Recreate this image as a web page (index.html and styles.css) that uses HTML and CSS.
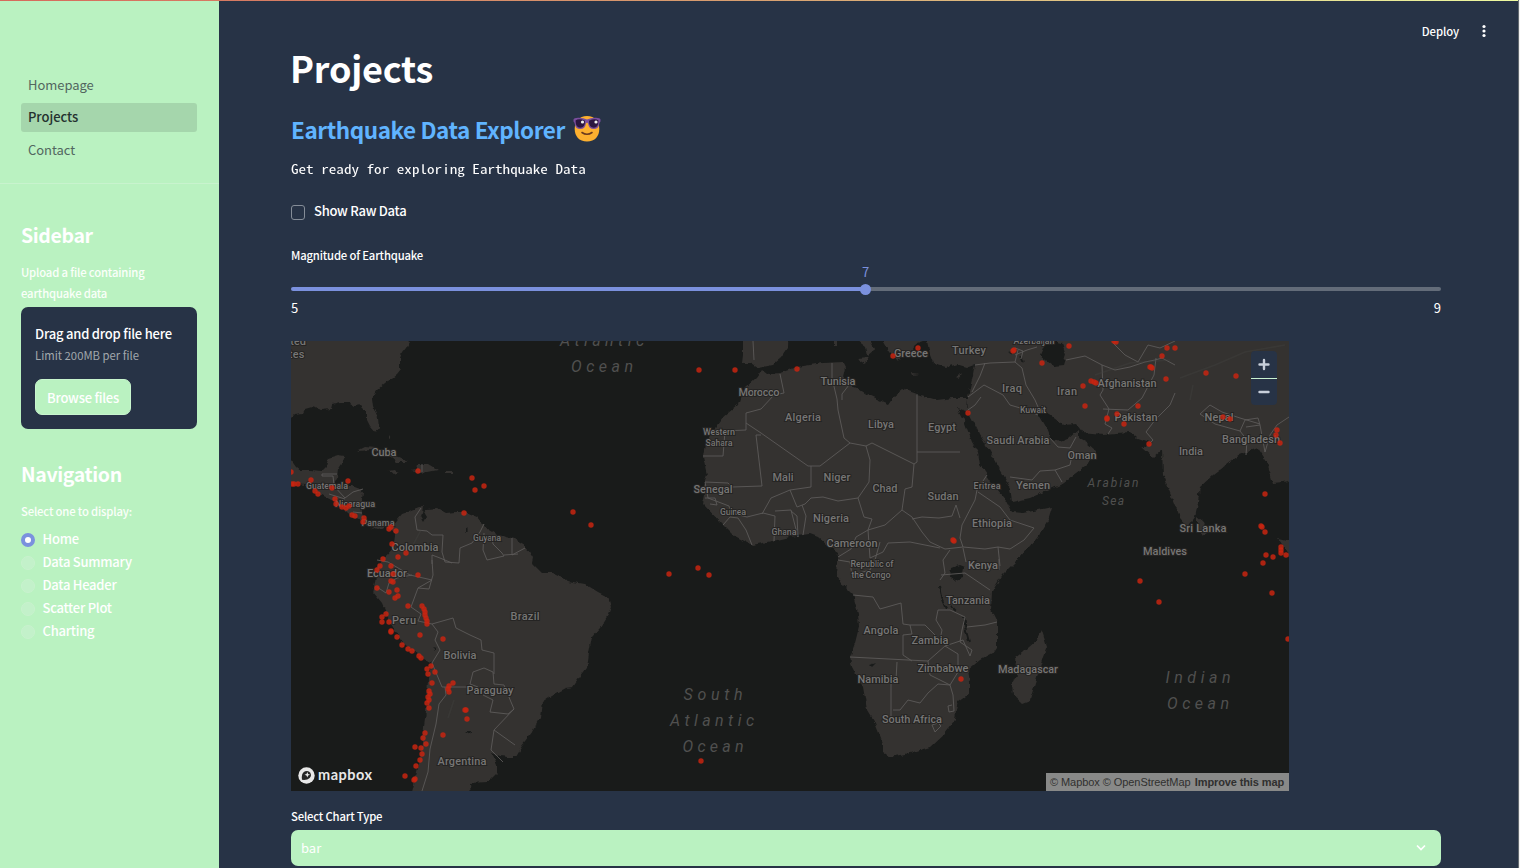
FILE: index.html
```html
<!DOCTYPE html>
<html lang="en">
<head>
<meta charset="utf-8">
<title>Projects</title>
<link rel="stylesheet" href="styles.css">
</head>
<body>
<div class="app">
  <div class="decoration"></div>
  <aside class="sidebar">
    <nav class="pages">
      <a class="page">Homepage</a>
      <a class="page active">Projects</a>
      <a class="page">Contact</a>
    </nav>
    <section class="side-body">
      <h2 class="side-title">Sidebar</h2>
      <div class="side-label upload-label">Upload a file containing<br>earthquake data</div>
      <div class="dropzone">
        <div class="drop-title">Drag and drop file here</div>
        <div class="drop-limit">Limit 200MB per file</div>
        <button class="browse">Browse files</button>
      </div>
      <h2 class="side-title nav-title">Navigation</h2>
      <div class="side-label">Select one to display:</div>
      <div class="radios">
        <label class="radio"><i class="ring on"></i><span>Home</span></label>
        <label class="radio"><i class="ring"></i><span>Data Summary</span></label>
        <label class="radio"><i class="ring"></i><span>Data Header</span></label>
        <label class="radio"><i class="ring"></i><span>Scatter Plot</span></label>
        <label class="radio"><i class="ring"></i><span>Charting</span></label>
      </div>
    </section>
  </aside>
  <main class="main">
    <header class="toolbar"><span>Deploy</span>
      <svg class="kebab" width="6" height="14" viewBox="0 0 6 14"><g fill="#fff"><circle cx="3" cy="2.5" r="1.6"/><circle cx="3" cy="7" r="1.6"/><circle cx="3" cy="11.5" r="1.6"/></g></svg>
    </header>
    <h1 class="title">Projects</h1>
    <h2 class="subtitle"><span class="sub-text">Earthquake Data Explorer</span>
      <svg class="emoji" width="28" height="28" viewBox="0 0 28 28"><path d="M14 1C6 1 1.700 7 1.700 14S6 26.500 14 26.500 26.300 21 26.300 14 22 1 14 1z" fill="#fdb02f"/><path d="M.5 4.500Q1 3 5 2.800q5-.2 9 1.700 4-1.900 9-1.700 4 .2 4.500 1.700v2q-1 .5-1.400 3-.8 4.500-5.300 4.500-5 0-5.700-5.500L14 7.500l-1.100 1Q12.200 14 7.200 14 2.700 14 1.900 9.500 1.500 7 .5 6.500z" fill="#7a4e9e"/><path d="M2.500 5.500Q6 3 12 5.800q.2 7-4.800 7Q2.700 12.800 2.500 5.500zM25.500 5.500Q22 3 16 5.800q-.2 7 4.800 7 4.500 0 4.700-7.300z" fill="#2b1640"/><circle cx="9.500" cy="7" r="1.600" fill="#eee"/><circle cx="23" cy="7" r="1.600" fill="#eee"/><path d="M9 17.500q5 3.500 10 0" fill="none" stroke="#6b3a1e" stroke-width="1.600" stroke-linecap="round"/></svg>
    </h2>
    <div class="mono"><span>Get ready for exploring Earthquake Data</span></div>
    <label class="check"><i class="box"></i><span>Show Raw Data</span></label>
    <div class="field-label slider-label">Magnitude of Earthquake</div>
    <div class="slider">
      <div class="track"><div class="thumb"><span class="value">7</span></div></div>
      <div class="ticks"><span>5</span><span>9</span></div>
    </div>
    <div class="map">
      <svg class="map-svg" viewBox="291 341 998 450" width="998" height="450">
        <defs><filter id="rough" filterUnits="userSpaceOnUse" x="281" y="331" width="1018" height="470" color-interpolation-filters="sRGB"><feTurbulence type="fractalNoise" baseFrequency=".16" numOctaves="2" seed="4"/><feDisplacementMap in="SourceGraphic" scale="5" xChannelSelector="R" yChannelSelector="G"/></filter></defs>
        <g class="land" filter="url(#rough)">
          <path d="M410 325L410 341 406 348 402 353 400 358 400 370 396 375 385 383 376 391 372 398 373 406 378 418 379 428 376 433 370 426 366 418 366 410 361 405 355 406 350 403 340 403 332 405 331 409 322 410 312 407 305 409 303 413 295 414 291 418 280 425V325z"/>
          <path d="M280 450L291 460 296 467 300 470 310 470 322 471 326 467 328 458 338 455 345 456 342 464 338 470 337 478 333 485 340 486 352 486 360 489 363 493 361 505 362 512 364 520 369 526 378 525 388 521 394 524 397 520 402 514 411 511 419 508 423 505 422 515 427 509 437 508 446 513 456 512 465 512 477 517 485 527 498 535 515 539 525 545 533 558 532 563 542 573 552 573 568 581 585 584 598 592 608 597 611 607 608 615 600 628 592 637 589 653 587 668 580 677 573 687 565 688 552 695 542 702 540 718 532 732 522 745 515 757 508 757 500 756 492 753 497 764 497 773 488 782 470 783 471 800 410 800 415 780 420 760 424 727 427 703 428 677 432 663 418 655 402 642 390 623 382 603 373 592 375 583 377 568 385 557 393 548 395 535 392 530 385 527 377 529 365 525 362 522 355 518 342 507 335 502 322 495 305 485 291 483 280 480z"/>
          <path d="M357 451L365 447 375 448 395 456 408 462 397 462 391 457 372 450zM410 471L416 470 417 464 428 464 438 470 428 472 420 473zM388 471l6-1 5 2-5 2zM446 471h6v2h-6zM389 435l2 3h-2z"/>
          <path d="M762 370L767 374 780 373 797 367 823 363 842 362 845 368 843 377 848 385 857 388 868 395 888 404 893 397 903 389 917 394 937 400 953 398 968 398 967 412 957 408 965 423 972 442 978 452 980 465 987 475 997 490 1007 502 1012 512 1023 513 1052 507 1048 520 1037 538 1020 557 1002 575 992 592 991 610 997 622 997 647 993 653 980 660 968 670 970 682 970 693 958 702 956 710 955 720 945 733 930 747 910 753 890 757 883 752 883 743 875 723 867 710 863 687 852 667 850 657 855 643 859 627 858 613 853 595 845 587 836 573 838 552 827 545 818 537 810 534 790 537 773 541 752 545 733 535 723 525 703 504 705 495 702 488 707 475 703 457 705 445 717 425 723 417 738 405 740 398 745 388 757 377z"/>
          <path d="M927 325L927 341 930 355 933 363 947 367 957 364 967 367 975 364 973 375 968 397 968 411 977 428 980 435 992 455 1003 475 1010 488 1012 502 1030 498 1060 485 1080 470 1095 458 1095 450 1087 443 1078 438 1078 430 1070 437 1060 441 1050 438 1045 425 1038 413 1040 407 1050 415 1063 425 1077 424 1083 432 1103 434 1130 432 1137 438 1152 443 1142 448 1153 458 1162 450 1163 475 1172 498 1180 518 1188 527 1195 517 1198 502 1200 487 1213 475 1230 462 1240 455 1258 448 1267 462 1273 483 1283 482 1300 478V325z"/>
          <path d="M743 325V341L743 355 742 363 750 363 758 368 773 365 782 357 788 348 789 325zM858 325V341L866 347 868 356 875 350 870 341V325zM856 358L868 357 865 364zM882 325L883 341 890 353 898 362 903 353 913 350 917 343 923 341V325zM911 373l9 1-8 1zM955 377l7-3-4 5zM834 325h3v22h-3z"/>
          <path d="M1197 517L1203 522 1207 532 1202 535 1197 528zM1278 538L1300 543V572zM1042 631L1047 647 1043 657 1037 677 1030 700 1022 703 1013 695 1012 683 1017 675 1015 658 1028 648 1037 640z"/>
        </g>
        <g class="water" filter="url(#rough)"><path d="M1040 355L1045 343 1053 341 1062 343 1066 355 1063 365 1053 366zM420 515l4-3 3 5-3 5zM951 568l8-3 5 2-2 11-8 3-4-3zM870 665l6-2-4 4zM432 647l4 1v3zM465 731h6l-1 3zM466 527l3 2-3 3zM1019 355l4 3 2 4-4-2zM1008 352l4-1 2 4z"/><path class="lake" d="M939 586l2 11 5 12M964 617l2 14 3 11M951 606l5 5"/></g>
        <g class="borders">
          <path d="M334 485L333 476H322V474H337M333 485L345 498 353 492 363 489M329 494L345 499M353 512L362 513M422 464V472"/>
          <path d="M421 508L415 517 417 530 427 531 432 535 443 535 442 552 445 562 459 563 460 548 472 543 480 532 484 524M484 533L483 550 487 560 504 556 502 553 493 544 492 537M512 538V555L525 548M504 555L518 554M432 564V555L440 558 452 563M432 560L433 575 429 589 418 588 432 580 410 575 388 562 377 560M377 587L386 593 389 583 397 578 412 575M418 588L411 607 421 614 418 621 432 624 453 618 456 628 470 635 481 640 482 650 494 653 494 674M432 624L438 632 435 640 440 650 432 663 442 687 470 687M478 687L470 684 473 672 484 668 493 672 494 684 504 685 511 702 514 709 508 714 490 712 493 700 483 695M514 709L494 730 491 750 503 762M494 730L515 745M445 687L446 695 439 704 436 724 430 749 428 772 422 791"/>
          <path d="M780 374L784 393 774 395 761 409 746 413V430L725 431 723 456 703 456M746 423L761 433 808 466 820 466 850 443 844 438 838 410 837 399 832 378 832 363M849 385L842 394V400M761 435L756 435 762 486 732 487 728 483 705 482 708 498 729 506 731 513 745 514M762 514L771 498 790 490 811 487 811 466M790 490L797 507 805 504 811 498 823 497 838 501 858 498 869 482 870 460 866 446 850 443M866 446L872 443 914 464 917 462V394M917 452L960 452M914 464L912 487 905 489 902 510 912 517 922 532 930 542 945 549 963 547 960 538 962 525 975 500 977 490 987 475M912 519L922 517 939 518 952 516 956 505 960 518M902 510L885 525 868 530 872 519 864 517 858 498M868 530L856 537 851 549 838 557M963 547L985 549 998 547 1010 549 1024 540 1034 528 1010 520 1000 507 978 492M998 547L1000 566M705 498H715L717 505 710 504M723 525L730 517 738 518 746 530 752 545M735 514L747 517 763 513 775 516 774 541M775 511L791 510 798 537M791 511L797 516 798 537M803 535L806 516 802 505M868 530L870 558 883 552 888 543 910 542 940 548M838 560L850 562 852 575 870 570 875 560 880 542M853 595L873 597 880 609 901 603 903 624 910 625 912 634 903 635V655L912 661M910 625L925 625 940 640 942 630 936 620 938 610 950 610 965 617 962 630 960 642 972 650 970 656 963 640 945 646 928 661 908 660 850 657M967 627L985 625 997 622M945 646L958 654 958 672 950 685 930 675 928 661M897 662L896 680 891 684V717M893 710L900 710 908 700 920 703 928 693 938 684 950 685 953 695 954 711 949 712 948 706 952 705M932 725l6-2 3 3-6 6zM941 575L965 573 990 590M940 580L945 573 943 560 950 550M963 548L966 562"/>
          <path d="M975 365L990 363 1015 362 1018 350M1015 362L1022 368 1026 385 1035 400 1038 407M981 397L975 405 968 410M968 397L984 385 1003 395 1010 405 1027 410 1038 415M1050 438L1058 447 1070 448 1076 437M1073 450L1070 465 1055 470 1040 471 1032 480 1010 477M1055 470L1062 482M985 363L980 376 972 392M1066 360L1085 356 1102 365 1103 390 1100 395 1109 409 1105 424 1112 428 1108 434M1103 409L1128 410 1142 398 1154 375 1156 358M1102 365L1115 370 1130 367 1145 362 1155 360 1162 358 1175 365M1175 393L1170 405 1155 420 1146 432 1153 440 1150 443M1113 343L1125 355 1138 362 1148 345 1160 348 1175 341M1200 414L1210 405 1222 412 1240 418 1260 424M1200 414L1215 424 1240 431 1245 420 1258 418 1260 425 1246 427M1240 431L1247 440 1246 455M1260 425L1265 452M1265 452L1270 435 1277 425 1289 417M753 341L754 360M999 559L999 570M1015 355l12-5 10-3M1015 348l8 3-2 8"/>
        </g>
        <g class="mountains"><path d="M1095 375L1130 363 1170 360M1180 378L1215 365 1245 352 1285 345M1190 400l3-15M421 530l-8 15M454 700l-6 18"/></g>
        <g id="labels" class="labels"></g>
        <g id="quakes" class="quakes"></g>
      </svg>
      <div class="zoom-control">
        <svg width="26" height="54" viewBox="0 0 26 54"><g stroke="#c8cfda" stroke-width="2.400" stroke-linecap="round"><path d="M8.500 13.500h9M13 9v9M8.500 41h9"/></g><path d="M0 27.500h26" stroke="#c9f2d0"/></svg>
      </div>
      <div class="mapbox-logo">
        <svg width="17" height="17" viewBox="0 0 17 17"><circle cx="8.500" cy="8.500" r="8.200" fill="#e8e8e8"/><path d="M4 12.800Q3 6 7 4.300q3.500-1.300 5.300 1.500 1.600 3-.6 5.300Q9 13.500 4 12.800z" fill="#252525"/><path d="M9.300 5l.8 2 2 .8-2 .8-.8 2-.8-2-2-.8 2-.8z" fill="#e8e8e8"/></svg>
        <span>mapbox</span>
      </div>
      <div class="attribution"><span>© Mapbox</span> <span>© OpenStreetMap</span> <b>Improve this map</b></div>
    </div>
    <div class="field-label select-label">Select Chart Type</div>
    <div class="select"><span>bar</span><svg width="10" height="8" viewBox="0 0 10 8"><path d="M1 1.500L5 5.500l4-4" fill="none" stroke="#fff" stroke-width="1.700"/></svg></div>
  </main>
  <div class="edge"></div>
</div>
<script src="map.js"></script>
</body>
</html>
```
FILE: styles.css
```css
* { box-sizing: border-box; }
body { margin: 0; background: #273346; color: #fff; font-family: "Noto Sans CJK SC", "Open Sans", sans-serif; font-size: 13px; }
h1, h2 { margin: 0; }
.app { position: relative; display: flex; width: 1520px; height: 868px; overflow: hidden; }
.decoration { position: absolute; z-index: 2; top: 0; left: 0; width: 1518px; height: 1px; background: linear-gradient(90deg, #d66a5c, #d8a070 50%, #eefaa0); }
.sidebar { flex: none; width: 219px; background: #baf2c1; }
.pages { display: flex; flex-direction: column; gap: 4px; height: 184px; padding: 71px 22px 0 21px; border-bottom: 1px solid #c8f3ce; }
.page { display: block; height: 29px; padding-left: 7px; border-radius: 3px; line-height: 28px; color: #52665f; letter-spacing: -.05px; }
.page.active { margin-top: -1px; background: #a5d6ac; color: #24312f; font-weight: 500; }
.side-body { padding: 36px 22px 0 21px; }
.side-title { height: 30px; line-height: 29px; font-size: 19.5px; font-weight: 700; letter-spacing: -.37px; }
.side-label { font-size: 11.3px; line-height: 21px; font-weight: 500; color: #fafffa; letter-spacing: -.17px; }
.upload-label { margin: 12px 0 3px; white-space: nowrap; }
.dropzone { height: 122px; padding: 16px 14px 0; border-radius: 7px; background: #273346; font-weight: 500; letter-spacing: -.2px; white-space: nowrap; }
.drop-title { line-height: 21px; }
.drop-limit { line-height: 22px; font-size: 11.3px; letter-spacing: 0; color: #a2a8ac; font-weight: 400; }
.browse { display: block; width: 96px; height: 36px; margin-top: 13px; padding: 0; border: 1px solid #c8f5ce; border-radius: 7px; background: #baf2c1; color: #fff; font: inherit; letter-spacing: -.25px; line-height: 31px; }
.nav-title { margin: 30px 0 12px; }
.radios { display: flex; flex-direction: column; margin-top: 6px; }
.radio { display: flex; align-items: center; gap: 7.5px; height: 23px; font-weight: 500; line-height: 21px; letter-spacing: -.25px; }
.radio span { height: 23px; }
.ring { width: 14px; height: 14px; border: 1px solid #c9f2ce; border-radius: 50%; background: #c3f1ca; }
.ring.on { border: 4px solid #7b91de; background: #fff; }
.main { width: 1299px; padding: 0 77px 0 72px; }
.toolbar { display: flex; align-items: center; justify-content: flex-end; gap: 22px; height: 46px; margin-right: -46px; padding-top: 15px; font-size: 11.3px; font-weight: 500; line-height: 30px; letter-spacing: -.1px; }
.title { height: 53px; margin-left: -1px; font-size: 36px; line-height: 43px; font-weight: 700; letter-spacing: -.2px; }
.subtitle { display: flex; align-items: center; gap: 8px; height: 60px; font-size: 22.5px; line-height: 60px; font-weight: 600; letter-spacing: -.42px; color: #60b4ff; }
.mono { height: 20px; font-family: "Noto Sans Mono CJK SC", "Source Code Pro", "DejaVu Sans Mono", monospace; font-size: 12.6px; line-height: 20px; }
.mono span { display: inline-block; transform: scaleX(1.2); transform-origin: 0 50%; }
.check { display: flex; align-items: center; gap: 9px; height: 24px; margin-top: 21px; font-weight: 500; letter-spacing: -.27px; }
.check span { line-height: 20px; height: 22px; }
.box { width: 14px; height: 15px; border: 1px solid #858d98; border-radius: 3px; }
.field-label { font-size: 11.3px; line-height: 20px; font-weight: 500; letter-spacing: -.18px; }
.slider-label { margin-top: 21px; }
.slider { height: 76px; padding-top: 22px; }
.track { position: relative; height: 4px; border-radius: 2px; background: linear-gradient(90deg, #7b91de 50%, #636c79 50%); }
.thumb { position: absolute; left: 569px; top: -3px; width: 11px; height: 11px; border-radius: 50%; background: #7b91de; }
.value { position: absolute; top: -22px; left: 0; width: 11px; text-align: center; line-height: 20px; color: #7b91de; }
.ticks { display: flex; justify-content: space-between; margin-top: 7px; line-height: 20px; }
.map { position: relative; width: 998px; height: 450px; overflow: hidden; background: #191b1a; }
.map-svg { display: block; }
.land { fill: #343230; }
.water { fill: #191b1a; }
.lake { fill: none; stroke: #191b1a; stroke-width: 2; }
.borders { fill: none; stroke: #5c5a59; stroke-width: .9; stroke-linejoin: round; }
.mountains { fill: none; stroke: #454443; stroke-width: 1.5; opacity: .35; }
.labels { font-family: Roboto, sans-serif; font-weight: 500; fill: #777675; stroke: #252423; stroke-width: 2px; paint-order: stroke; text-anchor: middle; }
.labels .ocean { font-weight: 400; font-style: italic; fill: #50504f; stroke: none; }
.quakes { fill: #c82510; fill-opacity: .85; }
.zoom-control { position: absolute; top: 10px; right: 12px; width: 26px; height: 54px; border-radius: 4px; background: #273346; }
.mapbox-logo { position: absolute; left: 7px; bottom: 7px; display: flex; align-items: center; gap: 3px; height: 18px; color: #e8e8e8; font: 700 14.5px/15px Lato, sans-serif; letter-spacing: .5px; }
.mapbox-logo span { height: 17px; }
.attribution { position: absolute; right: 0; bottom: 0; width: 243px; height: 18px; padding: 0 5px 0 4px; background: #888988; color: #30302f; font: 11px/18px "Liberation Sans", sans-serif; letter-spacing: -.07px; white-space: nowrap; display: flex; gap: 3px; }
.attribution b { margin-left: auto; letter-spacing: -.12px; }
.select-label { margin: 15px 0 4px; }
.select { display: flex; align-items: center; justify-content: space-between; height: 36px; padding: 0 15px 0 10px; border-radius: 7px; background: #baf2c1; line-height: 34px; }
.edge { width: 2px; border-left: 1px solid #646b70; background: #f1f1f1; }
```
FILE: map.js
```js
const NS = "http://www.w3.org/2000/svg";

// text, centre x, middle y, width, font size
const countries = [
  ["United", 290, 341, 32, 11], ["States", 288, 354, 33, 11], ["Cuba", 384, 452, 25, 11], ["Guatemala", 327, 486, 42, 9], ["Nicaragua", 355, 504, 40, 9],
  ["Panama", 378, 523, 33, 9], ["Colombia", 415, 547, 47, 11], ["Guyana", 487, 538, 28, 9], ["Ecuador", 387, 573, 40, 11],
  ["Peru", 404, 620, 24, 11], ["Brazil", 525, 616, 29, 11], ["Bolivia", 460, 655, 33, 11], ["Paraguay", 490, 690, 47, 11], ["Argentina", 462, 761, 49, 11],
  ["Morocco", 759, 392, 41, 11], ["Tunisia", 838, 381, 35, 11], ["Algeria", 803, 417, 36, 11], ["Libya", 881, 424, 26, 11], ["Egypt", 942, 427, 28, 11],
  ["Western", 719, 432, 32, 9], ["Sahara", 719, 443, 27, 9], ["Senegal", 713, 489, 39, 11], ["Mali", 783, 477, 21, 11], ["Niger", 837, 477, 27, 11],
  ["Chad", 885, 488, 25, 11], ["Sudan", 943, 496, 31, 11], ["Guinea", 733, 512, 26, 9], ["Ghana", 784, 532, 25, 9], ["Nigeria", 831, 518, 36, 11],
  ["Cameroon", 852, 543, 51, 11], ["Republic of", 872, 564, 43, 9], ["the Congo", 871, 575, 39, 9], ["Eritrea", 987, 486, 27, 9], ["Ethiopia", 992, 523, 40, 11],
  ["Kenya", 983, 565, 30, 11], ["Tanzania", 968, 600, 44, 11], ["Angola", 881, 630, 35, 11], ["Zambia", 930, 640, 37, 11], ["Zimbabwe", 943, 668, 51, 11],
  ["Namibia", 878, 679, 41, 11], ["South Africa", 912, 719, 60, 11], ["Madagascar", 1028, 669, 60, 11], ["Greece", 911, 353, 34, 11], ["Turkey", 969, 350, 34, 11],
  ["Azerbaijan", 1034, 341, 41, 9], ["Iraq", 1012, 388, 20, 11], ["Iran", 1067, 391, 20, 11], ["Kuwait", 1033, 410, 26, 9], ["Saudi Arabia", 1018, 440, 63, 11],
  ["Oman", 1082, 455, 29, 11], ["Yemen", 1033, 485, 34, 11], ["Afghanistan", 1127, 383, 59, 11], ["Pakistan", 1136, 417, 43, 11], ["India", 1191, 451, 24, 11],
  ["Nepal", 1219, 417, 29, 11], ["Bangladesh", 1251, 439, 58, 11], ["Sri Lanka", 1203, 528, 47, 11], ["Maldives", 1165, 551, 44, 11]
];
const seas = [
  ["Atlantic", 602, 340, 84, 16], ["Ocean", 602, 366, 62, 16], ["South", 713, 694, 59, 16], ["Atlantic", 712, 720, 84, 16], ["Ocean", 713, 746, 61, 16],
  ["Indian", 1198, 677, 65, 16], ["Ocean", 1198, 703, 62, 16], ["Arabian", 1113, 483, 51, 12], ["Sea", 1113, 501, 22, 12]
];
const labels = document.getElementById("labels");
function addLabel(item, cls) {
  const [text, x, y, width, size] = item;
  const el = document.createElementNS(NS, "text");
  el.setAttribute("x", x);
  el.setAttribute("y", y + size * 0.36);
  el.setAttribute("font-size", size);
  el.setAttribute("textLength", width);
  if (cls) el.setAttribute("class", cls);
  el.textContent = text;
  labels.appendChild(el);
}
seas.forEach(s => addLabel(s, "ocean"));
countries.forEach(c => addLabel(c));

// earthquake epicentres as x, y pairs
const points = [
  291,472,292,484,294,484,298,484,311,480,348,481,315,491,318,494,332,488,335,499,336,504,342,507,346,508,349,506,352,515,355,516,364,518,363,522,
  389,529,391,527,396,531,392,544,406,553,398,557,391,566,383,559,380,566,377,570,418,471,472,478,484,486,475,490,464,513,573,512,591,525,
  669,574,698,568,709,575,699,370,735,370,797,369,893,356,918,348,968,413,953,540,954,541,1140,581,1159,602,701,761,961,679,
  393,574,418,575,391,581,393,582,377,588,389,592,397,590,398,596,395,598,408,606,386,614,382,617,382,622,389,622,391,631,391,632,397,637,402,645,408,649,412,651,419,656,421,658,
  422,606,424,609,425,612,425,615,426,618,427,621,427,624,420,635,443,639,431,666,427,669,435,672,428,674,432,683,429,691,430,694,428,697,429,700,427,703,429,708,
  453,683,449,686,448,689,449,692,465,710,466,710,467,719,443,735,425,733,423,738,426,744,415,747,421,748,422,754,420,760,416,766,405,776,414,780,415,779,
  1013,351,1014,350,1042,363,1069,346,1114,341,1116,342,1083,386,1091,381,1094,382,1096,383,1085,406,1107,418,1107,419,1117,414,1138,406,1124,424,1150,367,1151,367,1152,368,
  1162,356,1167,348,1175,348,1166,379,1206,373,1236,376,1223,417,1230,419,1149,444,1277,430,1276,435,1280,443,1265,494,1261,526,1262,527,1265,532,
  1281,547,1281,550,1281,553,1286,555,1266,555,1273,557,1263,563,1245,574,1272,593,1288,639
];
const quakes = document.getElementById("quakes");
for (let i = 0; i < points.length; i += 2) {
  const dot = document.createElementNS(NS, "circle");
  dot.setAttribute("cx", points[i]);
  dot.setAttribute("cy", points[i + 1]);
  dot.setAttribute("r", 2.7);
  quakes.appendChild(dot);
}
```
